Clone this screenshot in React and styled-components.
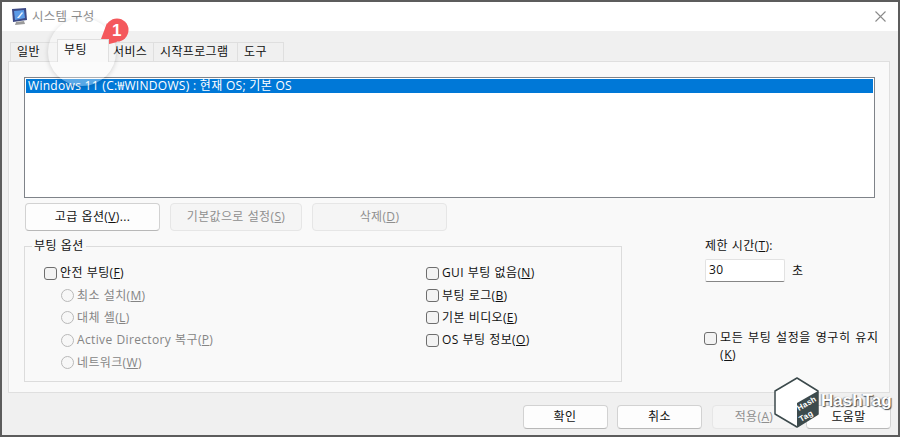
import styled, { createGlobalStyle } from "styled-components"

const Global = createGlobalStyle`
html, body {
  margin: 0;
  padding: 0;
  background: #f0f0f0;
}
* { box-sizing: border-box; }
`
const Dialog = styled.div`
position: relative;
width: 900px;
height: 437px;
overflow: hidden;
display: flex;
flex-direction: column;
background: #f0f0f0;
border: 2px solid #5c5c5c;
font-family: "Open Sans", "Noto Sans CJK KR", sans-serif;
font-size: 12px;
line-height: 16px;
letter-spacing: 0.35px;
word-spacing: 0.5px;
color: #111;
`
const TitleBar = styled.div`
height: 29px;
flex: none;
display: flex;
align-items: center;
background: #fff;
padding: 0 12px 0 9px;
column-gap: 3px;
.title{
  flex: 1;
  color: #8c8c8c;
  font-size: 12.5px;
  letter-spacing: 0.2px;
}
`
const Tabs = styled.div`
display: flex;
align-items: flex-end;
height: 31px;
flex: none;
margin: 0 0 -1px 9px;
`
const Tab = styled.div`
position: relative;
height: ${p => p.$active ? "23px" : "20px"};
width: ${p => p.$w}px;
display: flex;
align-items: center;
padding-left: ${p => p.$pad}px;
background: ${p => p.$active ? "#f9f9f9" : "#f0f0f0"};
border: 1px solid #dfdfdf;
border-bottom: ${p => p.$active ? "none" : "1px solid #dfdfdf"};
margin-left: -1px;
z-index: ${p => p.$active ? 1 : 0};
padding-bottom: ${p => p.$active ? "3px" : "1px"};
`
const Panel = styled.div`
margin: 0 8px 0 6px;
height: 332px;
flex: none;
background: #f9f9f9;
border: 1px solid #dfdfdf;
padding: 15px 14px 0 15px;
`
const ListBox = styled.div`
height: 121px;
background: #fff;
border: 1px solid #7f8389;
padding: 1px;
`
const ListRow = styled.div`
height: 14px;
line-height: 13px;
background: #0078d7;
color: #fff;
padding-left: 2px;
white-space: nowrap;
letter-spacing: 0.3px;
word-spacing: 0;
`
const ButtonRow = styled.div`
display: flex;
column-gap: 10px;
margin: 5px 0 15px 1px;
`
const Button = styled.div`
width: ${p => p.$w}px;
height: ${p => p.$h}px;
display: flex;
align-items: center;
justify-content: center;
padding-bottom: 1px;
border-radius: 4px;
background: ${p => p.$disabled ? "#f5f5f5" : "#fdfdfd"};
border: 1px solid ${p => p.$disabled ? "#e6e6e6" : "#d2d2d2"};
border-bottom-color: ${p => p.$disabled ? "#e6e6e6" : "#b8b8b8"};
color: ${p => p.$disabled ? "#8f8f8f" : "#111"};
`
const Options = styled.div`
display: flex;
`
const Group = styled.div`
position: relative;
flex: none;
width: 598px;
height: 136px;
border: 1px solid #dcdcdc;
display: grid;
grid-template-columns: 382px 1fr;
padding: 15px 0 0 19px;
`
const Legend = styled.span`
position: absolute;
top: -9px;
left: 7px;
padding: 0 2px;
background: #f9f9f9;
`
const Column = styled.div`
display: flex;
flex-direction: column;
`
const Option = styled.label`
display: flex;
align-items: center;
column-gap: 3px;
height: 22.4px;
padding-left: ${p => p.$indent ? "17px" : "0"};
color: ${p => p.$disabled ? "#858585" : "#111"};
white-space: nowrap;
`
const CheckBox = styled.span`
width: 13px;
height: 13px;
flex: none;
border: 1px solid #6e6e6e;
border-radius: 3px;
background: #f3f3f3;
`
const Radio = styled.span`
width: 13px;
height: 13px;
flex: none;
border: 1px solid #b9b9b9;
border-radius: 50%;
background: #f7f7f7;
`
const Side = styled.div`
margin-left: 83px;
margin-top: -8px;
width: 180px;
display: flex;
flex-direction: column;
.persist{
  display: flex;
  column-gap: 3px;
  margin-top: 47px;
  margin-left: -1px;
  line-height: 17px;
  width: 178px;
  white-space: nowrap;
  letter-spacing: 0.6px;
  word-spacing: 1px;
}
.persist > span:first-child{
  margin-top: 3px;
}
`
const Timeout = styled.div`
display: flex;
align-items: center;
column-gap: 7px;
margin-top: 5px;
`
const Input = styled.div`
width: 80px;
height: 23px;
background: #fff;
border: 1px solid #e2e2e2;
border-bottom-color: #868686;
border-radius: 2px;
padding: 2px 3px;
`
const Footer = styled.div`
display: flex;
justify-content: flex-end;
column-gap: 9.5px;
margin: 12px 7px 0 0;
`
const Spotlight = styled.div`
position: absolute;
left: 46px;
top: 16px;
width: 68px;
height: 68px;
border-radius: 50%;
background: rgba(255, 255, 255, 0.35);
box-shadow: 0 1px 5px rgba(0, 0, 0, 0.16);
`
const Marker = styled.svg`
position: absolute;
left: 90px;
top: 12px;
width: 44px;
height: 44px;
`
const Cube = styled.svg`
position: absolute;
left: 771px;
top: 373px;
width: 52px;
height: 60px;
`
const Brand = styled.span`
position: absolute;
left: 819px;
top: 389px;
font-family: "Liberation Sans", sans-serif;
font-size: 17px;
line-height: 20px;
font-weight: 700;
letter-spacing: 0;
color: #fff;
text-shadow: 1px 1px 1px #444, -1px 0 1px #999;
`

const K = ({ children }) => <>(<u>{children}</u>)</>

const MonitorIcon = () => (
  <svg width="18" height="20" viewBox="0 0 18 20">
    <path d="M1 2 L15 1 L16 13 L2 15 Z" fill="#3d4a86" />
    <path d="M3 4 L13 3 L14 11 L4 13 Z" fill="#5b9be8" />
    <path d="M6 11 L11 5 L12 6 L8 11 Z" fill="#e8f1fb" />
    <path d="M5 15 L13 14 L14 17 L4 18 Z" fill="#9a9a9a" />
  </svg>
)
const CloseIcon = () => (
  <svg width="11" height="11" viewBox="0 0 11 11">
    <path d="M0.5 0.5 L10.5 10.5 M10.5 0.5 L0.5 10.5" stroke="#8a8a8a" strokeWidth="1.1" />
  </svg>
)

const tabs = [["일반", 48, 6], ["부팅", 52, 6], ["서비스", 46, 4], ["시작프로그램", 85, 6], ["도구", 47, 6]]
const bootLeft = [["최소 설치", "M"], ["대체 셸", "L"], ["Active Directory 복구", "P"], ["네트워크", "W"]]
const bootRight = [["GUI 부팅 없음", "N"], ["부팅 로그", "B"], ["기본 비디오", "E"], ["OS 부팅 정보", "O"]]

export default function App() {
  return (
    <Dialog>
      <Global />
      <TitleBar>
        <MonitorIcon />
        <span className="title">시스템 구성</span>
        <CloseIcon />
      </TitleBar>
      <Tabs>
        {tabs.map(([name, w, pad]) => (
          <Tab key={name} $w={w} $pad={pad} $active={name === "부팅"}>{name}</Tab>
        ))}
      </Tabs>
      <Panel>
        <ListBox>
          <ListRow>Windows 11 (C:₩WINDOWS) : 현재 OS; 기본 OS</ListRow>
        </ListBox>
        <ButtonRow>
          <Button $w={135} $h={28}><span>고급 옵션<K>V</K>...</span></Button>
          <Button $w={132} $h={28} $disabled><span>기본값으로 설정<K>S</K></span></Button>
          <Button $w={135} $h={28} $disabled><span>삭제<K>D</K></span></Button>
        </ButtonRow>
        <Options>
          <Group>
            <Legend>부팅 옵션</Legend>
            <Column>
              <Option><CheckBox /><span>안전 부팅<K>F</K></span></Option>
              {bootLeft.map(([text, key]) => (
                <Option key={key} $indent $disabled><Radio /><span>{text}<K>{key}</K></span></Option>
              ))}
            </Column>
            <Column>
              {bootRight.map(([text, key]) => (
                <Option key={key}><CheckBox /><span>{text}<K>{key}</K></span></Option>
              ))}
            </Column>
          </Group>
          <Side>
            <span>제한 시간<K>T</K>:</span>
            <Timeout>
              <Input>30</Input>
              <span>초</span>
            </Timeout>
            <div className="persist">
              <CheckBox />
              <span>모든 부팅 설정을 영구히 유지<br /><K>K</K></span>
            </div>
          </Side>
        </Options>
      </Panel>
      <Footer>
        <Button $w={85} $h={24}>확인</Button>
        <Button $w={85} $h={24}>취소</Button>
        <Button $w={85} $h={24} $disabled><span>적용<K>A</K></span></Button>
        <Button $w={85} $h={24}>도움말</Button>
      </Footer>
      <Spotlight />
      <Marker viewBox="0 0 44 44">
        <path d="M6 33 L15 9 L25 28 Z" fill="#f4585c" />
        <circle cx="25" cy="16" r="11.5" fill="#f4585c" />
        <text x="25" y="22" textAnchor="middle" fontFamily="Liberation Sans, sans-serif" fontWeight="700" fontSize="17" fill="#fff">1</text>
      </Marker>
      <Cube viewBox="0 0 52 60">
        <path d="M24 3 L45 16 L45 39 L24 52 L2 39 L2 16 Z" fill="#fff" stroke="#3c4a4c" strokeWidth="1.5" strokeLinejoin="round" />
        <path d="M24 28 L45 16 L45 39 L24 52 Z" fill="#3c4a4c" />
        <g fill="#fff" fontFamily="Liberation Sans, sans-serif" fontWeight="700" fontSize="8">
          <text transform="translate(26 36) rotate(-30)">Hash</text>
          <text transform="translate(28 47) rotate(-30)">Tag</text>
        </g>
      </Cube>
      <Brand>HashTag</Brand>
    </Dialog>
  )
}
